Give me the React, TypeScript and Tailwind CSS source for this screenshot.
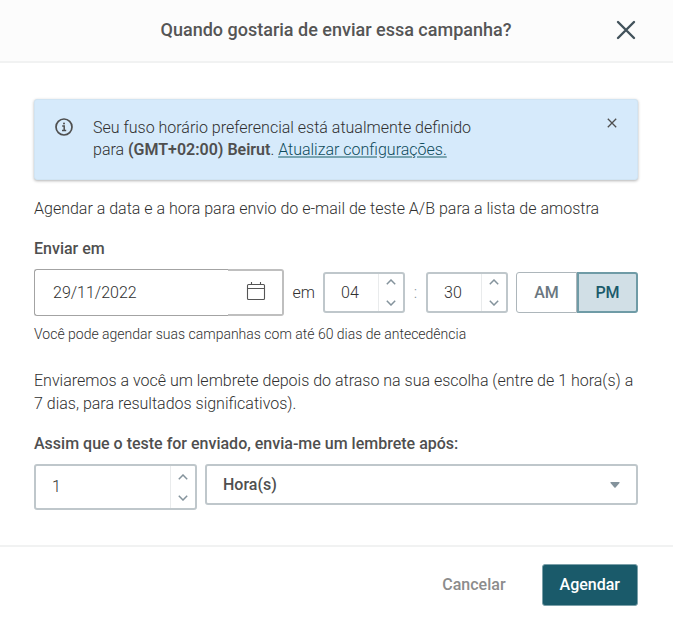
import React, { useState } from 'react';

const ChevronUp = () => (
  <svg width="10" height="6" viewBox="0 0 10 6" fill="none" stroke="#84939c" strokeWidth="1.5">
    <path d="M0.8 5.2 L5 1 L9.2 5.2" />
  </svg>
);

const ChevronDown = () => (
  <svg width="10" height="6" viewBox="0 0 10 6" fill="none" stroke="#84939c" strokeWidth="1.5">
    <path d="M0.8 0.8 L5 5 L9.2 0.8" />
  </svg>
);

type StepperProps = {
  label: string;
  value: number;
  min: number;
  max: number;
  pad?: boolean;
  className: string;
  onChange: (value: number) => void;
};

const Stepper = ({ label, value, min, max, pad, className, onChange }: StepperProps) => {
  const clamp = (n: number) => Math.min(max, Math.max(min, n));

  return (
    <div className={`flex shrink-0 rounded-[3px] border-2 border-[#bfc7cb] bg-white ${className}`}>
      <input
        className="min-w-0 flex-1 bg-transparent pl-4 outline-none"
        type="text"
        inputMode="numeric"
        aria-label={label}
        value={pad ? String(value).padStart(2, '0') : value}
        onChange={(e) => onChange(clamp(Number(e.target.value) || min))}
      />
      <div className="flex w-[25px] flex-col border-l border-[#e9ebec]">
        <button type="button" aria-label={`${label}: aumentar`} className="flex flex-1 items-end justify-center pb-[7px]" onClick={() => onChange(clamp(value + 1))}>
          <ChevronUp />
        </button>
        <button type="button" aria-label={`${label}: diminuir`} className="flex flex-1 items-start justify-center pt-2" onClick={() => onChange(clamp(value - 1))}>
          <ChevronDown />
        </button>
      </div>
    </div>
  );
};

const App = () => {
  const [date, setDate] = useState('29/11/2022');
  const [hour, setHour] = useState(4);
  const [minute, setMinute] = useState(30);
  const [period, setPeriod] = useState<'AM' | 'PM'>('PM');
  const [delay, setDelay] = useState(1);
  const [unit, setUnit] = useState('hours');
  const [showNotice, setShowNotice] = useState(true);

  return (
    <div className="bg-white font-[Roboto,sans-serif] text-base font-light text-[#303030]">
      <header className="grid grid-cols-[1fr_auto_1fr] items-center border-b-2 border-[#f1f2f2] bg-[#fcfcfc] pt-4 pr-[37px] pb-[17px] pl-9">
        <h1 className="col-start-2 text-lg leading-7 font-medium text-[#555555]">Quando gostaria de enviar essa campanha?</h1>
        <button type="button" aria-label="Fechar" className="justify-self-end">
          <svg width="20" height="20" viewBox="0 0 20 20" fill="none" stroke="#42525b" strokeWidth="2.4" strokeLinecap="round">
            <path d="M2 2 L18 18 M18 2 L2 18" />
          </svg>
        </button>
      </header>

      <main className="pt-9 pr-[35px] pb-[35px] pl-[34px]">
        {showNotice && (
          <div className="flex items-start rounded-[3px] border border-[#d0e4f3] bg-[#d6eafb] px-5 pt-[17px] pb-[18px] shadow-[0_1px_3px_rgba(0,0,0,0.3)]">
            <svg className="mt-px shrink-0" width="18" height="18" viewBox="0 0 18 18" fill="none" stroke="#4f4f4f">
              <circle cx="9" cy="9" r="8" strokeWidth="1.7" />
              <path d="M7.2 8 H9.2 V12.5 M7 12.5 H11.2" strokeWidth="1.5" />
              <circle cx="9" cy="5.5" r="1" fill="#4f4f4f" stroke="none" />
            </svg>
            <p className="ml-5 leading-[22px]">
              Seu fuso horário preferencial está atualmente definido
              <br />
              para <b className="font-semibold text-[#4f4f4f]">(GMT+02:00) Beirut</b>.{' '}
              <a href="#" className="text-[#0f4c5c] underline decoration-[#79a5b2] decoration-2">Atualizar configurações.</a>
            </p>
            <button type="button" aria-label="Fechar aviso" className="mt-px ml-auto" onClick={() => setShowNotice(false)}>
              <svg width="10" height="10" viewBox="0 0 10 10" fill="none" stroke="#4f4f4f" strokeWidth="1.3">
                <path d="M0.8 0.8 L9.2 9.2 M9.2 0.8 L0.8 9.2" />
              </svg>
            </button>
          </div>
        )}

        <p className="mt-[17px]">Agendar a data e a hora para envio do e-mail de teste A/B para a lista de amostra</p>

        <label htmlFor="date" className="mt-4 block font-medium text-[#4f4f4f]">Enviar em</label>
        <div className="mt-2 flex items-center">
          <div className="flex h-[47px] min-w-0 flex-1">
            <input
              id="date"
              className="min-w-0 flex-1 rounded-l-[3px] border border-r-0 border-[#a3a3a3] bg-transparent pl-[18px] outline-none"
              type="text"
              value={date}
              onChange={(e) => setDate(e.target.value)}
            />
            <button type="button" aria-label="Abrir calendário" className="flex w-14 shrink-0 items-center rounded-r-[3px] border-2 border-l-0 border-[#bfbfbf] pb-1 pl-[18px]">
              <svg width="20" height="20" viewBox="0 0 20 20" fill="none" stroke="#555555" strokeWidth="1.1">
                <rect x="1.5" y="3.5" width="17" height="15" rx="1" />
                <path d="M1.5 7.5 H18.5 M5.5 1 V3.5 M14.5 1 V3.5" />
              </svg>
            </button>
          </div>
          <span className="mr-2 ml-[9px]">em</span>
          <Stepper label="Hora" value={hour} min={1} max={12} pad className="h-[41px] w-[82px]" onChange={setHour} />
          <span className="w-[21px] shrink-0 text-center text-[#84939c]">:</span>
          <Stepper label="Minuto" value={minute} min={0} max={59} pad className="h-[41px] w-[82px]" onChange={setMinute} />
          <div className="ml-2 flex h-[41px] shrink-0">
            {(['AM', 'PM'] as const).map((p) => (
              <button
                key={p}
                type="button"
                aria-pressed={period === p}
                className={`w-[61px] border font-medium first:rounded-l-[3px] last:rounded-r-[3px] ${period === p ? 'border-2 border-[#6f9ba6] bg-[#d1dfe6] text-[#1a5a6a]' : 'border-[#adb6bb] bg-white text-[#6b7780]'}`}
                onClick={() => setPeriod(p)}
              >
                {p}
              </button>
            ))}
          </div>
        </div>
        <p className="mt-2 text-sm">Você pode agendar suas campanhas com até 60 dias de antecedência</p>

        <p className="mt-[25px] leading-[23px]">
          Enviaremos a você um lembrete depois do atraso na sua escolha (entre de 1 hora(s) a 7 dias, para resultados significativos).
        </p>

        <label htmlFor="unit" className="mt-[17px] block font-medium text-[#4f4f4f]">Assim que o teste for enviado, envia-me um lembrete após:</label>
        <div className="mt-2 flex items-start gap-2">
          <Stepper label="Atraso" value={delay} min={1} max={99} className="h-[46px] w-[163px]" onChange={setDelay} />
          <div className="relative flex-1">
            <select
              id="unit"
              className="h-[41px] w-full appearance-none rounded-[3px] border-2 border-[#bfc7cb] bg-white pl-4 font-medium text-[#4f4f4f] outline-none"
              value={unit}
              onChange={(e) => setUnit(e.target.value)}
            >
              <option value="hours">Hora(s)</option>
              <option value="days">Dia(s)</option>
            </select>
            <svg className="pointer-events-none absolute top-[18px] right-[18px]" width="10" height="6" viewBox="0 0 10 6" fill="#84939c">
              <path d="M1 0 H9 Q10 0 9.5 1 L5.6 5.5 Q5 6 4.4 5.5 L0.5 1 Q0 0 1 0 Z" />
            </svg>
          </div>
        </div>
      </main>

      <footer className="flex items-center justify-end gap-9 border-t-2 border-[#f1f2f2] pt-[17px] pr-[35px] pb-[17px] pl-9">
        <button type="button" className="font-medium text-[#8c8c8c]">Cancelar</button>
        <button type="button" className="h-[42px] rounded-[3px] border border-[#7ba0a9] bg-[#1a5a6a] px-[17px] font-medium text-white">Agendar</button>
      </footer>
    </div>
  );
};

export default App;
